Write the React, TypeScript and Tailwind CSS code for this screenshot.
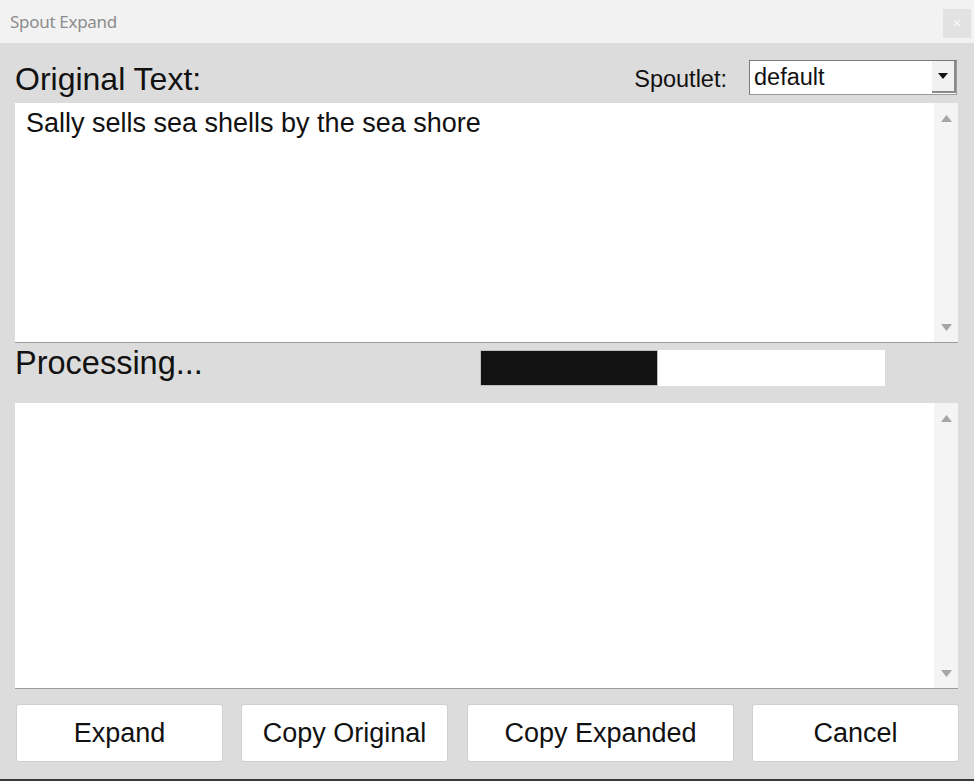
import React from 'react';

const ArrowUp = () => (
  <svg width="11" height="7" viewBox="0 0 11 7" className="block">
    <path d="M5.5 0L11 7H0z" fill="#a6a6a6" />
  </svg>
);

const ArrowDown = () => (
  <svg width="11" height="7" viewBox="0 0 11 7" className="block">
    <path d="M0 0h11L5.5 7z" fill="#a6a6a6" />
  </svg>
);

// Zone de texte avec barre de défilement grise
const TextPane: React.FC<{ height: string; text?: string }> = ({ height, text }) => (
  <div className={`flex ${height} bg-white border-b border-[#9c9c9c]`}>
    <div className="flex-1 pl-[11px] pt-[4px] text-[27px] leading-[32px] text-[#111]">{text}</div>
    <div className="w-[24px] bg-[#f4f4f4] flex flex-col items-center justify-between pt-[12px] pb-[11px]">
      <ArrowUp />
      <ArrowDown />
    </div>
  </div>
);

const Btn: React.FC<{ label: string; className: string }> = ({ label, className }) => (
  <button
    className={`${className} shrink-0 h-[58px] bg-white border border-[#cfcfcf] rounded-[3px] text-[27px] text-[#111] flex items-center justify-center`}
  >
    {label}
  </button>
);

export default function App() {
  return (
    <div
      className="w-[974px] h-[781px] flex flex-col bg-[#dcdcdc] border-b-2 border-[#3a3a3a]"
      style={{ fontFamily: '"Liberation Sans", Arial, sans-serif' }}
    >
      {/* barre de titre */}
      <div className="h-[43px] bg-[#f2f2f2] flex items-center justify-between pl-[10px] pr-[3px]">
        <span
          className="text-[17px] text-[#8c8c8c] tracking-[-0.3px]"
          style={{ fontFamily: '"Noto Sans", "Open Sans", sans-serif' }}
        >
          Spout Expand
        </span>
        <div className="w-[28px] h-[29px] mt-[4px] bg-[#e2e2e2] flex items-center justify-center text-[15px] text-[#f9f9f9]">
          ×
        </div>
      </div>

      <div className="flex flex-col pl-[15px] pr-[16px]">
        {/* en-tête */}
        <div className="h-[60px] flex items-start">
          <div className="mt-[20px] text-[32px] leading-[32px] text-[#111]">Original Text:</div>
          <div className="ml-auto mt-[17px] flex items-start">
            <span className="mt-[5px] text-[23.5px] leading-[28px] text-[#111]">Spoutlet:</span>
            <div className="ml-[22px] mr-[1px] w-[208px] h-[35px] flex bg-white border border-t-[#7a7a7a] border-l-[#7a7a7a] border-r-[#9a9a9a] border-b-[#9a9a9a]">
              <span className="flex-1 pl-[4px] pt-[1px] text-[23.5px] leading-[30px] text-[#111]">default</span>
              <div className="w-[24px] h-[32px] bg-[#f1f1f1] border-r-2 border-b-2 border-[#8a8a8a] flex items-center justify-center">
                <svg width="10" height="6" viewBox="0 0 10 6">
                  <path d="M0 0h10L5 6z" fill="#111" />
                </svg>
              </div>
            </div>
          </div>
        </div>

        <TextPane height="h-[240px]" text="Sally sells sea shells by the sea shore" />

        {/* progression */}
        <div className="h-[60px] flex items-start">
          <div className="w-[465px] mt-[4px] text-[32.5px] leading-[32px] text-[#111]">Processing...</div>
          <div className="mt-[7px] w-[405px] h-[36px] bg-white flex">
            <div className="w-[178px] h-full bg-[#121212] border border-[#bdbdbd]" />
          </div>
        </div>

        <TextPane height="h-[286px]" />

        {/* boutons */}
        <div className="mt-[15px] flex pl-[1px]">
          <Btn label="Expand" className="w-[207px]" />
          <Btn label="Copy Original" className="w-[207px] ml-[18px]" />
          <Btn label="Copy Expanded" className="w-[267px] ml-[19px]" />
          <Btn label="Cancel" className="w-[207px] ml-[18px]" />
        </div>
      </div>
    </div>
  );
}
